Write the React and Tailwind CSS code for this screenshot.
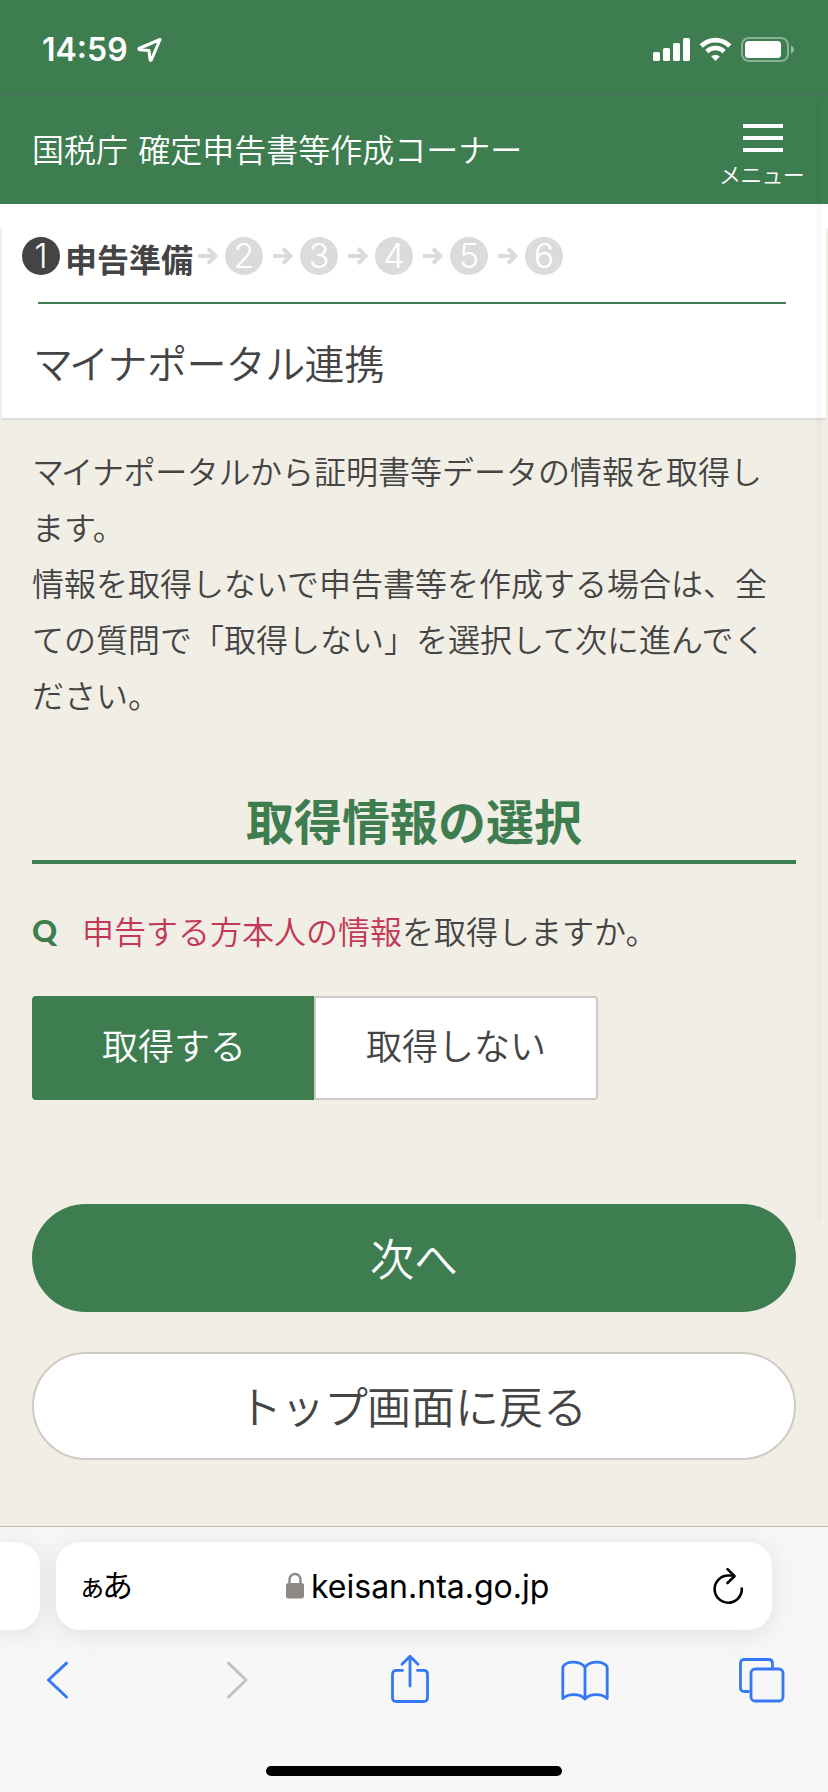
import React, { useState } from "react";

const steps = [2, 3, 4, 5, 6];

const StepArrow = () => (
  <svg className="h-5 w-5 shrink-0" viewBox="0 0 20 20" fill="none" stroke="#dbdbda" strokeWidth="4">
    <path d="M0 10H17M10 2.5L17.5 10L10 17.5" />
  </svg>
);

const StatusBar = () => (
  <div className="flex h-[96px] items-start border-b border-[#467059] pl-[42px] pr-[33px] text-white">
    <span className="mt-[30px] w-[95px] font-['Inter'] text-[32px] leading-[40px] font-semibold">
      14:59
    </span>
    <svg className="mt-[37px] h-[26px] w-[26px]" viewBox="0 0 26 26" fill="none">
      <path
        d="M23 2.5L2 11.5Q1.5 12.5 2.5 12.8L12 13.5L13 22.5Q13.3 24 14.3 23L23 2.5Z"
        stroke="white"
        strokeWidth="3"
        strokeLinejoin="round"
      />
    </svg>
    <div className="ml-auto flex">
      <svg className="mt-[37px] h-[25px] w-[38px]" viewBox="0 0 38 25" fill="white">
        <rect x="0" y="15" width="7" height="9" rx="1.5" />
        <rect x="10" y="11" width="7" height="13" rx="1.5" />
        <rect x="20" y="6" width="7" height="18" rx="1.5" />
        <rect x="30" y="1" width="7" height="23" rx="1.5" />
      </svg>
      <svg className="mt-[37px] ml-[8px] h-[25px] w-[33px]" viewBox="0 0 33 25" fill="none" stroke="white">
        <path d="M2.2 9A20.3 20.3 0 0 1 30.8 9" strokeWidth="4.6" />
        <path d="M7.8 14.6A12.4 12.4 0 0 1 25.2 14.6" strokeWidth="4.4" />
        <path d="M16.5 24L12.2 19.5A6.2 6.2 0 0 1 20.8 19.5Z" fill="white" stroke="none" />
      </svg>
      <svg className="mt-[37px] ml-[9px] h-[25px] w-[54px]" viewBox="0 0 54 25">
        <rect x="1" y="1" width="46" height="23" rx="7" fill="none" stroke="white" strokeOpacity="0.4" strokeWidth="2" />
        <rect x="4" y="4" width="36" height="17" rx="3.5" fill="white" />
        <path d="M50 8.5Q53 10 53 12.5T50 16.5Z" fill="white" fillOpacity="0.5" />
      </svg>
    </div>
  </div>
);

const SiteHeader = () => (
  <header className="flex h-[108px] items-start justify-between pl-8 pr-[22px] text-white">
    <h1 className="mt-[28px] text-[32px] leading-[48px] font-[350] [word-spacing:3px]">
      国税庁 確定申告書等作成コーナー
    </h1>
    <button className="mt-[28px] flex w-[86px] flex-col items-center">
      <span className="flex flex-col gap-2">
        <span className="h-1 w-10 bg-white"></span>
        <span className="h-1 w-10 bg-white"></span>
        <span className="h-1 w-10 bg-white"></span>
      </span>
      <span className="mt-[5px] mr-[3px] text-[22px] leading-[32px] font-[350] tracking-[-0.7px] whitespace-nowrap">
        メニュー
      </span>
    </button>
  </header>
);

const StepNav = () => (
  <div>
    <div className="h-6 bg-white"></div>
    <div className="mx-[2px] border-b-2 border-[#dcdddb] bg-white">
      <div className="flex h-[56px] items-center pl-5">
        <span className="flex h-[38px] w-[38px] items-center justify-center rounded-full bg-[#444444] font-['Inter'] text-[34px] leading-none font-light text-white">
          1
        </span>
        <span className="mt-[3px] ml-[5px] mr-[5px] text-[32px] leading-[40px] font-bold">申告準備</span>
        {steps.map((step, index) => (
          <div key={step} className={index === 0 ? "flex items-center" : "ml-[10px] flex items-center"}>
            <StepArrow />
            <span className="ml-[7px] flex h-[38px] w-[38px] items-center justify-center rounded-full bg-[#dbdbda] font-['Inter'] text-[34px] leading-none font-light text-white">
              {step}
            </span>
          </div>
        ))}
      </div>
      <div className="mt-[18px] mr-[40px] ml-[36px] h-[2px] bg-[#3e7d4f]"></div>
      <h2 className="h-[114px] pt-[28px] pl-[31px] text-[40px] leading-[60px] font-[350]">
        <span className="tracking-[-4px]">マ</span>
        <span className="tracking-[-0.6px]">イナポータル</span>連携
      </h2>
    </div>
  </div>
);

const BrowserBar = () => (
  <footer className="flex h-[266px] flex-col overflow-hidden border-t border-[#bfbeb9] bg-[#f7f7f7]">
    <div className="mt-[15px] flex h-[88px] gap-4 text-black">
      <div className="w-10 rounded-r-[24px] bg-white shadow-[0_4px_24px_rgba(80,70,40,0.13)]"></div>
      <div className="flex w-[716px] items-center rounded-[24px] bg-white shadow-[0_4px_24px_rgba(80,70,40,0.13)]">
        <span className="mt-[2px] ml-[22px] w-[208px] leading-[40px]">
          <span className="text-[28px] tracking-[-4px]">ぁ</span>
          <span className="text-[31px]">あ</span>
        </span>
        <svg className="mt-[-2px] h-[27px] w-[18px]" viewBox="0 0 18 27">
          <path d="M3.5 12V7.5a5.5 5.5 0 0 1 11 0V12" fill="none" stroke="#8e8986" strokeWidth="2.4" />
          <rect x="0" y="11" width="18" height="15.5" rx="2.5" fill="#8e8986" />
        </svg>
        <span className="mt-px ml-[7px] font-['Inter'] text-[32px] leading-[40px]">keisan.nta.go.jp</span>
        <svg
          className="mr-[28px] ml-auto h-[38px] w-[32px]"
          viewBox="0 0 32 38"
          fill="none"
          stroke="black"
          strokeWidth="2.6"
          strokeLinecap="round"
          strokeLinejoin="round"
        >
          <path d="M29.8 21.5A13.6 13.6 0 1 1 16.2 8.5H22" />
          <path d="M15.5 2.2L22.5 9.2L15.5 16" />
        </svg>
      </div>
    </div>
    <div className="mt-[24px] flex h-[52px] items-center pl-[46px] text-[#3478f6]">
      <svg className="h-[38px] w-[23px]" viewBox="0 0 23 38" fill="none" stroke="currentColor" strokeWidth="3" strokeLinecap="round" strokeLinejoin="round">
        <path d="M20.5 2.2L2.5 19L20.5 36" />
      </svg>
      <svg className="ml-[157px] h-[38px] w-[23px]" viewBox="0 0 23 38" fill="none" stroke="#c2c3bd" strokeWidth="3" strokeLinecap="round" strokeLinejoin="round">
        <path d="M2.5 2.2L20 19L2.5 36" />
      </svg>
      <svg className="mt-[-2px] ml-[141px] h-[50px] w-[40px]" viewBox="0 0 40 50" fill="none" stroke="currentColor" strokeWidth="2.8" strokeLinecap="round" strokeLinejoin="round">
        <path d="M12.5 16.4H6.5Q2.5 16.4 2.5 20.4V43.5Q2.5 47.5 6.5 47.5H33.5Q37.5 47.5 37.5 43.5V20.4Q37.5 16.4 33.5 16.4H27.5" />
        <path d="M20 32V2.5M12 10.3L20 2.3L28 10.3" />
      </svg>
      <svg className="mt-[1px] ml-[130px] h-[42px] w-[50px]" viewBox="0 0 50 42" fill="none" stroke="currentColor" strokeWidth="2.8" strokeLinejoin="round">
        <path d="M25 7.5C21 1 7 0 2.8 7V38.5C8 33.5 20 33 25 39C30 33 42 33.5 47.2 38.5V7C43 0 29 1 25 7.5ZM25 7.5V39" />
      </svg>
      <svg className="ml-[128px] h-[46px] w-[47px]" viewBox="0 0 47 46" fill="none" stroke="currentColor" strokeWidth="2.8" strokeLinejoin="round">
        <path d="M11.5 34.5H6.5Q2.5 34.5 2.5 30.5V6.5Q2.5 2.5 6.5 2.5H30.5Q34.5 2.5 34.5 6.5V11.5" />
        <rect x="13" y="12" width="32" height="32" rx="4" />
      </svg>
    </div>
    <div className="mx-auto mt-[60px] h-[10px] w-[296px] rounded-full bg-black"></div>
  </footer>
);

const App = () => {
  const [fetchSelf, setFetchSelf] = useState(true);

  const selected = "w-[282px] rounded-l-[4px] bg-[#3e7d4f] pb-[8px] pl-[2px] text-white";
  const unselected = "w-[284px] rounded-r-[4px] border-2 border-[#d0cac3] bg-white pb-[8px] text-[#444444]";

  return (
    <div
      lang="ja"
      className="relative flex h-[1792px] w-[828px] flex-col overflow-hidden bg-[#f1eee5] font-['Noto_Sans_CJK_JP',sans-serif] text-[#444444]"
    >
      <div className="bg-[#3e7d4f]">
        <StatusBar />
        <SiteHeader />
      </div>
      <StepNav />

      <main className="flex-1 px-8 pt-[22px]">
        <p className="text-[32px] leading-[56px] font-[350] whitespace-nowrap">
          <span className="tracking-[-3px]">マ</span>
          <span className="tracking-[-0.4px]">イナポータル</span>から証明書等データの情報を取得し
          <br />
          ます。
          <br />
          情報を取得しないで申告書等を作成する場合は、全
          <br />
          ての質問で「取得しない」を選択して次に進んでく
          <br />
          ださい。
        </p>

        <h3 className="mt-[63px] h-[79px] border-b-4 border-[#3e7d4f] text-center text-[48px] leading-[68px] font-bold text-[#3e7d4f]">
          取得情報の選択
        </h3>

        <div className="mt-[42px] flex h-[48px] items-center">
          <span className="w-[50px] font-['Lato'] text-[31px] leading-[48px] font-black text-[#3e7d4f]">Q</span>
          <p className="text-[32px] leading-[48px] font-[350]">
            <span className="text-[#c33854]">申告する方本人の情報</span>を取得しますか。
          </p>
        </div>

        <div className="mt-[42px] flex h-[104px] text-[36px] leading-none font-[350]">
          <button className={fetchSelf ? selected : unselected} onClick={() => setFetchSelf(true)}>
            取得する
          </button>
          <button className={fetchSelf ? unselected : selected} onClick={() => setFetchSelf(false)}>
            取得しない
          </button>
        </div>

        <button className="mt-[104px] block h-[108px] w-full rounded-full bg-[#3e7d4f] pb-[2px] text-[44px] leading-none font-[350] text-white">
          次へ
        </button>
        <button className="mt-[40px] block h-[108px] w-full rounded-full border-2 border-[#d0cac3] bg-white pr-[3px] pb-[3px] text-[44px] leading-none font-[350]">
          <span className="tracking-[-1px]">トップ</span>画面に戻る
        </button>
      </main>

      <BrowserBar />

      {/* scroll indicator */}
      <div className="pointer-events-none absolute top-[102px] right-[6px] h-[1118px] w-[6px] rounded-full bg-black/[0.025]"></div>
    </div>
  );
};

export default App;
